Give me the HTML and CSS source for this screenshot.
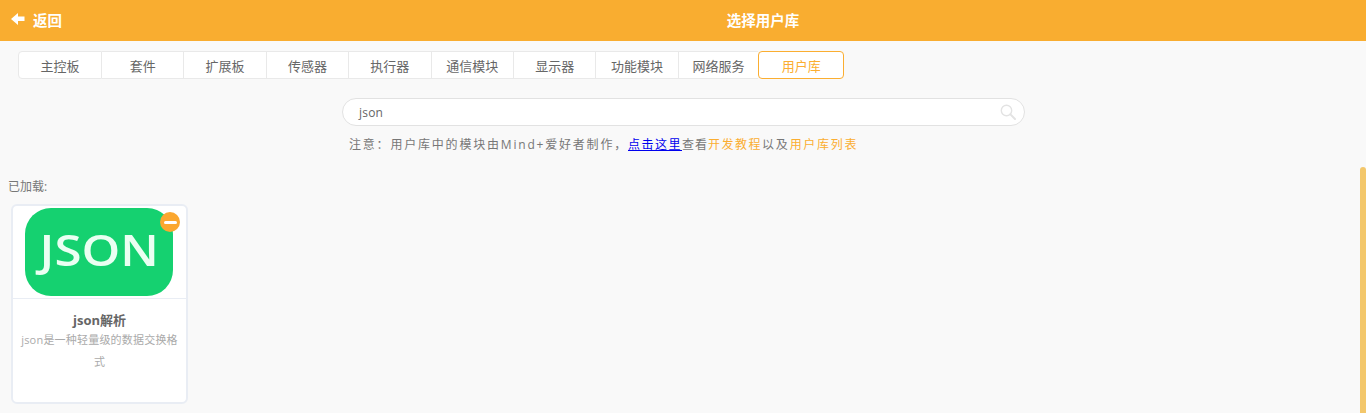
FILE: index.html
```html
<!DOCTYPE html>
<html lang="zh">
<head>
<meta charset="utf-8">
<title>选择用户库</title>
<link rel="stylesheet" href="styles.css">
</head>
<body>
<header class="topbar">
  <a class="back">
    <svg class="back-icon" viewBox="0 0 14 12" width="14" height="12"><path d="M0 6 L7 0 L7 3.6 L13.5 3.6 L13.5 8 L7 8 L7 12 Z" fill="#fff"/></svg>
    <span>返回</span>
  </a>
  <h1 class="title">选择用户库</h1>
</header>
<nav class="tabs">
  <a class="tab">主控板</a>
  <a class="tab">套件</a>
  <a class="tab">扩展板</a>
  <a class="tab">传感器</a>
  <a class="tab">执行器</a>
  <a class="tab">通信模块</a>
  <a class="tab">显示器</a>
  <a class="tab">功能模块</a>
  <a class="tab tab-plain">网络服务</a>
  <a class="tab tab-active">用户库</a>
</nav>
<section class="search-area">
  <div class="search">
    <span class="search-text">json</span>
    <svg class="search-icon" viewBox="0 0 16 16" width="16" height="16"><circle cx="6.5" cy="6.5" r="5.2" fill="none" stroke="#e3e3e3" stroke-width="1.4"/><path d="M10.4 10.4 L15 15" stroke="#e3e3e3" stroke-width="2" stroke-linecap="round"/></svg>
  </div>
  <p class="notice">注意：用户库中的模块由Mind+爱好者制作，<a class="link">点击这里</a><span class="tight">查看</span><span class="hl">开发教程</span>以及<span class="hl-list">用户库列表</span></p>
</section>
<section class="loaded">
  <div class="loaded-label">已加载:</div>
  <article class="card">
    <div class="card-image">
      <div class="logo"><span class="logo-text">JSON</span></div>
      <span class="remove"><span class="remove-bar"></span></span>
    </div>
    <div class="card-body">
      <div class="card-name">json解析</div>
      <div class="card-desc">json是一种轻量级的数据交换格式</div>
    </div>
  </article>
</section>
<div class="scrollbar"></div>
</body>
</html>
```
FILE: styles.css
```css
* { box-sizing: border-box; }
html, body { height: 100%; }
body {
  margin: 0;
  background: #f9f9f9;
  font-family: "Open Sans", "Noto Sans CJK SC", sans-serif;
  color: #666;
  overflow: hidden;
  position: relative;
}
.topbar {
  height: 41px;
  padding-bottom: 3px;
  background: #f9ad30;
  color: #fff;
  display: grid;
  grid-template-columns: 160px 1fr;
  align-items: center;
}
.back {
  display: flex;
  align-items: center;
  padding-left: 11px;
  gap: 8px;
  font-size: 14.5px;
  font-weight: 700;
}
.back-icon { margin-top: -1px; }
.title {
  margin: 0;
  font-size: 14.5px;
  font-weight: 700;
  text-align: center;
}
.tabs {
  display: flex;
  margin: 10px 0 0 18px;
  height: 28px;
}
.tab {
  width: 82.4px;
  display: flex;
  align-items: center;
  justify-content: center;
  background: #fff;
  border: 1px solid #e9e9e9;
  border-left: 0;
  font-size: 13px;
  color: #666;
}
.tab:first-child {
  border-left: 1px solid #e9e9e9;
  border-radius: 4px 0 0 4px;
  width: 84px;
}
.tab-plain { width: 79.5px; border-right: 0; }
.tab-active {
  width: 86px;
  border: 1px solid #fbae31;
  border-radius: 4px;
  color: #fbae31;
}
.search-area {
  margin-top: 19px;
  padding-left: 1px;
  display: flex;
  flex-direction: column;
  align-items: center;
}
.search {
  width: 683px;
  height: 28px;
  background: #fff;
  border: 1px solid #e2e2e2;
  border-radius: 14px;
  display: flex;
  align-items: center;
  justify-content: space-between;
  padding: 0 8px 0 16px;
  font-size: 12px;
  color: #666;
}
.search-text { letter-spacing: 0.2px; }
.notice {
  margin: 10px 0 0;
  width: 683px;
  padding-left: 7px;
  font-size: 12px;
  line-height: 18px;
  letter-spacing: 1.8px;
  color: #777;
}
.link { color: #00e; text-decoration: underline; letter-spacing: 1.5px; }
.tight { letter-spacing: 1px; }
.hl { color: #fbae31; letter-spacing: 1.5px; }
.hl-list { color: #fbae31; letter-spacing: 1.7px; }
.loaded {
  margin-top: 25px;
  padding-left: 8px;
}
.loaded-label {
  font-size: 12px;
  line-height: 16px;
  color: #777;
}
.card {
  margin: 9px 0 0 3px;
  width: 177px;
  height: 200px;
  background: #fff;
  border: 2px solid #e9edf4;
  border-radius: 6px;
  position: relative;
}
.card-image {
  height: 93px;
  border-bottom: 1px solid #e9edf4;
  padding: 1px 13px 0 12px;
}
.logo {
  height: 88px;
  margin-top: 1px;
  background: #15d170;
  border-radius: 26px;
  color: #eafff2;
  font-size: 44px;
  font-weight: 600;
  line-height: 82px;
  text-align: center;
  filter: blur(0.5px);
}
.logo-text {
  display: inline-block;
  transform: scaleX(1.12);
}
.remove {
  position: absolute;
  top: 6px;
  right: 6px;
  width: 20px;
  height: 20px;
  border-radius: 50%;
  background: #fba72f;
  display: flex;
  align-items: center;
  justify-content: center;
}
.remove-bar {
  width: 13px;
  height: 3px;
  background: #fff;
  border-radius: 2px;
}
.card-body {
  padding: 13px 6px 0;
  text-align: center;
}
.card-name {
  font-size: 13px;
  line-height: 17px;
  font-weight: 700;
  color: #666;
}
.card-desc {
  font-size: 11px;
  line-height: 22px;
  letter-spacing: 0.2px;
  color: #aaa;
}
.scrollbar {
  position: absolute;
  top: 167px;
  right: 0;
  bottom: 0;
  width: 6px;
  background: #f3c76b;
  border-radius: 3px 3px 0 0;
}
```
